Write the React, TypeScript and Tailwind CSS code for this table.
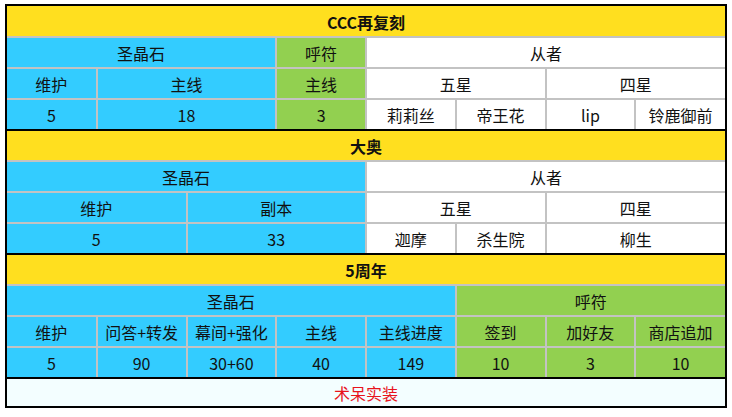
import { Fragment } from "react";

const BLUE = "bg-[#33ccff]";
const GREEN = "bg-[#92d050]";
const WHITE = "bg-white";
const YELLOW = "bg-[#ffdf1f]";

type Cell = { text: string; span?: number; bg: string };

function Row({ cells, last, header }: { cells: Cell[]; last?: boolean; header?: boolean }) {
  return (
    <tr className="h-[31px]">
      {cells.map((c, i) => (
        <td
          key={i}
          colSpan={c.span ?? 1}
          className={`border-2 border-[#c3c3c3] p-0 pt-[1px] text-center align-middle leading-none whitespace-nowrap ${c.bg} ${
            last ? "border-b-black" : ""
          } ${header ? "border-t-black font-bold" : ""}`}
        >
          {c.text}
        </td>
      ))}
    </tr>
  );
}

const sections: { title: string; rows: Cell[][] }[] = [
  {
    title: "CCC再复刻",
    rows: [
      [
        { text: "圣晶石", span: 3, bg: BLUE },
        { text: "呼符", bg: GREEN },
        { text: "从者", span: 4, bg: WHITE },
      ],
      [
        { text: "维护", bg: BLUE },
        { text: "主线", span: 2, bg: BLUE },
        { text: "主线", bg: GREEN },
        { text: "五星", span: 2, bg: WHITE },
        { text: "四星", span: 2, bg: WHITE },
      ],
      [
        { text: "5", bg: BLUE },
        { text: "18", span: 2, bg: BLUE },
        { text: "3", bg: GREEN },
        { text: "莉莉丝", bg: WHITE },
        { text: "帝王花", bg: WHITE },
        { text: "lip", bg: WHITE },
        { text: "铃鹿御前", bg: WHITE },
      ],
    ],
  },
  {
    title: "大奥",
    rows: [
      [
        { text: "圣晶石", span: 4, bg: BLUE },
        { text: "从者", span: 4, bg: WHITE },
      ],
      [
        { text: "维护", span: 2, bg: BLUE },
        { text: "副本", span: 2, bg: BLUE },
        { text: "五星", span: 2, bg: WHITE },
        { text: "四星", span: 2, bg: WHITE },
      ],
      [
        { text: "5", span: 2, bg: BLUE },
        { text: "33", span: 2, bg: BLUE },
        { text: "迦摩", bg: WHITE },
        { text: "杀生院", bg: WHITE },
        { text: "柳生", span: 2, bg: WHITE },
      ],
    ],
  },
  {
    title: "5周年",
    rows: [
      [
        { text: "圣晶石", span: 5, bg: BLUE },
        { text: "呼符", span: 3, bg: GREEN },
      ],
      [
        { text: "维护", bg: BLUE },
        { text: "问答+转发", bg: BLUE },
        { text: "幕间+强化", bg: BLUE },
        { text: "主线", bg: BLUE },
        { text: "主线进度", bg: BLUE },
        { text: "签到", bg: GREEN },
        { text: "加好友", bg: GREEN },
        { text: "商店追加", bg: GREEN },
      ],
      [
        { text: "5", bg: BLUE },
        { text: "90", bg: BLUE },
        { text: "30+60", bg: BLUE },
        { text: "40", bg: BLUE },
        { text: "149", bg: BLUE },
        { text: "10", bg: GREEN },
        { text: "3", bg: GREEN },
        { text: "10", bg: GREEN },
      ],
    ],
  },
];

export default function App() {
  return (
    <div className="w-[732px] h-[417px] bg-white pt-[4px] pl-[5px]">
      <div
        className="w-[722px] border-2 border-black text-[16px] text-[#111]"
        style={{ fontFamily: '"Noto Sans CJK SC", "Noto Sans", sans-serif' }}
      >
        <table className="w-[718px] table-fixed border-collapse border-hidden">
          <colgroup>
            {Array.from({ length: 8 }).map((_, i) => (
              <col key={i} />
            ))}
          </colgroup>
          <tbody>
            {sections.map((s, si) => (
              <Fragment key={si}>
                <Row header cells={[{ text: s.title, span: 8, bg: YELLOW }]} />
                {s.rows.map((r, ri) => (
                  <Row key={ri} cells={r} last={ri === s.rows.length - 1} />
                ))}
              </Fragment>
            ))}
            <tr className="h-[28px]">
              <td
                colSpan={8}
                className="border-2 border-[#c3c3c3] border-t-black bg-[#f3feff] p-0 pt-[1px] text-center align-middle leading-none text-[#e8131c]"
              >
                术呆实装
              </td>
            </tr>
          </tbody>
        </table>
      </div>
    </div>
  );
}
